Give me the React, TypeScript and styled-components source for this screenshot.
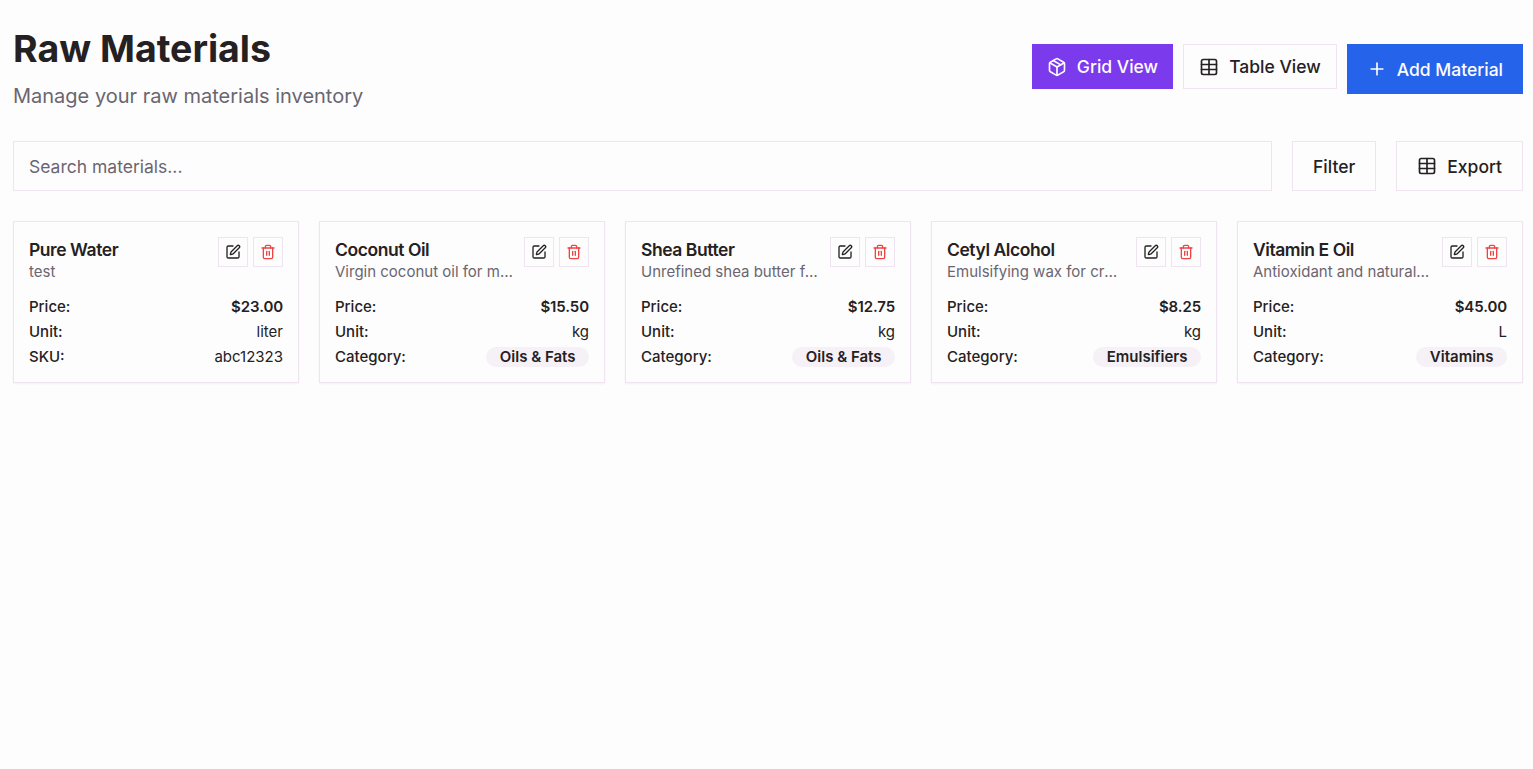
import React from 'react';
import styled, { createGlobalStyle } from 'styled-components';
import { Package, Plus, SquarePen, Table, Trash2 } from 'lucide-react';

const GlobalStyle = createGlobalStyle`
    html, body {
        margin: 0;
        background: #fdfdfd;
    }

    body {
        font-family: Inter, "Noto Sans", sans-serif;
        color: #252122;
    }

    * {
        box-sizing: border-box;
    }
`;

const Page = styled.div`
    min-height: 769px;
    padding: 28px 10px 0 13px;
`;

const Header = styled.header`
    display: flex;
    justify-content: space-between;
    align-items: center;
    margin-bottom: 31px;
`;

const Title = styled.h1`
    margin: 0 0 12px;
    font-size: 37.5px;
    line-height: 42px;
    font-weight: 700;
`;

const Subtitle = styled.p`
    margin: 0;
    font-size: 20px;
    line-height: 28px;
    color: #6b6570;
`;

const HeaderActions = styled.div`
    display: flex;
    align-items: flex-start;
    gap: 10px;
`;

interface ButtonProps {
    $variant?: 'outline' | 'purple' | 'blue';
    $compact?: boolean;
}

const Button = styled.button<ButtonProps>`
    display: inline-flex;
    align-items: center;
    justify-content: center;
    gap: 10px;
    height: ${(props) => (props.$compact ? 45 : 50)}px;
    padding: 0 ${(props) => (props.$compact ? 15 : 20)}px;
    font-family: inherit;
    font-size: 17.5px;
    font-weight: 500;
    white-space: nowrap;
    cursor: pointer;
    border: ${(props) => (!props.$variant || props.$variant === 'outline' ? '1px solid #f0e4f0' : 'none')};
    background: ${(props) =>
        props.$variant === 'purple' ? '#7c3aed' : props.$variant === 'blue' ? '#2563eb' : 'transparent'};
    color: ${(props) => (!props.$variant || props.$variant === 'outline' ? '#252122' : '#fdfdfd')};
`;

const Toolbar = styled.div`
    display: flex;
    gap: 20px;
    margin-bottom: 30px;
`;

const SearchInput = styled.input`
    flex: 1;
    min-width: 0;
    height: 50px;
    padding: 0 15px;
    font-family: inherit;
    font-size: 17.5px;
    color: #252122;
    background: transparent;
    border: 1px solid #f0e4f0;
    outline: none;

    &::placeholder {
        color: #6b6570;
        opacity: 1;
    }
`;

const CardGrid = styled.div`
    display: grid;
    grid-template-columns: repeat(5, minmax(0, 1fr));
    gap: 20px;
`;

const Card = styled.article`
    padding: 15px;
    height: 162px;
    background: #fdfdfd;
    border: 1px solid #f0e4f0;
    box-shadow: 0 1px 2px rgba(0, 0, 0, 0.05);
`;

const CardHead = styled.div`
    display: flex;
    justify-content: space-between;
    gap: 10px;
    margin-bottom: 15px;
`;

const CardTitleGroup = styled.div`
    min-width: 0;
    flex: 1;
`;

const CardTitle = styled.h3`
    margin: 0;
    font-size: 17.5px;
    line-height: 25px;
    font-weight: 600;
    letter-spacing: -0.44px;
    white-space: nowrap;
    overflow: hidden;
    text-overflow: ellipsis;
`;

const CardDescription = styled.p`
    margin: 0;
    font-size: 15px;
    line-height: 20px;
    color: #6b6570;
    white-space: nowrap;
    overflow: hidden;
    text-overflow: ellipsis;
`;

const CardActions = styled.div`
    display: flex;
    gap: 5px;
    flex-shrink: 0;
`;

const IconButton = styled.button<{ $danger?: boolean }>`
    display: flex;
    align-items: center;
    justify-content: center;
    width: 30px;
    height: 30px;
    padding: 0;
    background: transparent;
    border: 1px solid #f0e4f0;
    color: ${(props) => (props.$danger ? '#ef4444' : '#252122')};
    cursor: pointer;
`;

const Rows = styled.div`
    display: flex;
    flex-direction: column;
    gap: 5px;
`;

const Row = styled.div`
    display: flex;
    justify-content: space-between;
    align-items: center;
    height: 20px;
    font-size: 15px;
    line-height: 20px;
`;

const Label = styled.span`
    font-weight: 500;
`;

const Value = styled.span<{ $strong?: boolean }>`
    font-weight: ${(props) => (props.$strong ? 600 : 400)};
    letter-spacing: ${(props) => (props.$strong ? '-0.1px' : '0')};
`;

const Pill = styled.span`
    padding: 0 13.5px;
    height: 20px;
    border-radius: 10px;
    background: #f5f1f7;
    font-size: 15px;
    line-height: 20px;
    font-weight: 600;
`;

interface Material {
    name: string;
    description: string;
    price: string;
    unit: string;
    sku?: string;
    category?: string;
}

const materials: Material[] = [
    { name: 'Pure Water', description: 'test', price: '$23.00', unit: 'liter', sku: 'abc12323' },
    {
        name: 'Coconut Oil',
        description: 'Virgin coconut oil for moisturizing',
        price: '$15.50',
        unit: 'kg',
        category: 'Oils & Fats',
    },
    {
        name: 'Shea Butter',
        description: 'Unrefined shea butter for rich creams',
        price: '$12.75',
        unit: 'kg',
        category: 'Oils & Fats',
    },
    {
        name: 'Cetyl Alcohol',
        description: 'Emulsifying wax for creams',
        price: '$8.25',
        unit: 'kg',
        category: 'Emulsifiers',
    },
    {
        name: 'Vitamin E Oil',
        description: 'Antioxidant and natural preservative',
        price: '$45.00',
        unit: 'L',
        category: 'Vitamins',
    },
];

const App: React.FC = () => {
    return (
        <Page>
            <GlobalStyle />
            <Header>
                <div>
                    <Title>Raw Materials</Title>
                    <Subtitle>Manage your raw materials inventory</Subtitle>
                </div>
                <HeaderActions>
                    <Button $variant="purple" $compact>
                        <Package size={20} />
                        Grid View
                    </Button>
                    <Button $compact>
                        <Table size={20} />
                        Table View
                    </Button>
                    <Button $variant="blue">
                        <Plus size={20} />
                        Add Material
                    </Button>
                </HeaderActions>
            </Header>
            <Toolbar>
                <SearchInput placeholder="Search materials..." />
                <Button>Filter</Button>
                <Button>
                    <Table size={20} />
                    Export
                </Button>
            </Toolbar>
            <CardGrid>
                {materials.map((material) => (
                    <Card key={material.name}>
                        <CardHead>
                            <CardTitleGroup>
                                <CardTitle>{material.name}</CardTitle>
                                <CardDescription>{material.description}</CardDescription>
                            </CardTitleGroup>
                            <CardActions>
                                <IconButton aria-label="Edit">
                                    <SquarePen size={16} />
                                </IconButton>
                                <IconButton $danger aria-label="Delete">
                                    <Trash2 size={16} />
                                </IconButton>
                            </CardActions>
                        </CardHead>
                        <Rows>
                            <Row>
                                <Label>Price:</Label>
                                <Value $strong>{material.price}</Value>
                            </Row>
                            <Row>
                                <Label>Unit:</Label>
                                <Value>{material.unit}</Value>
                            </Row>
                            {material.sku ? (
                                <Row>
                                    <Label>SKU:</Label>
                                    <Value>{material.sku}</Value>
                                </Row>
                            ) : (
                                <Row>
                                    <Label>Category:</Label>
                                    <Pill>{material.category}</Pill>
                                </Row>
                            )}
                        </Rows>
                    </Card>
                ))}
            </CardGrid>
        </Page>
    );
};

export default App;
